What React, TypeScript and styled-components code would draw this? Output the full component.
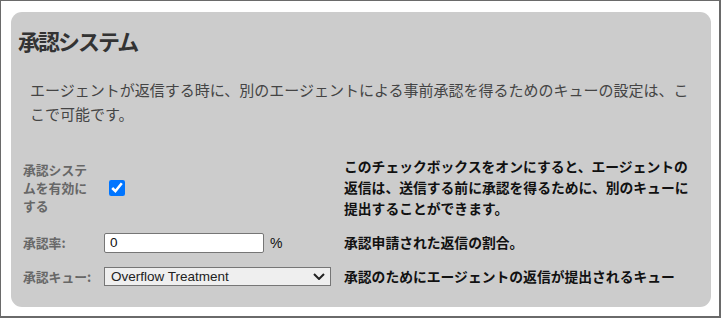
import styled, { createGlobalStyle } from "styled-components";

const Global = createGlobalStyle`
  html, body {
    margin: 0;
    padding: 0;
    background: #fff;
  }
  body {
    font-family: "Noto Sans CJK JP", "Noto Sans", sans-serif;
  }
`;

// outer window frame
const Frame = styled.div`
  box-sizing: border-box;
  width: 721px;
  height: 318px;
  border-style: solid;
  border-color: #6a6a6a;
  border-width: 1px 2px 2px 1px;
  padding: 11px 8px 9px 10px;
  background: #fff;
`;

const Panel = styled.div`
  box-sizing: border-box;
  height: 100%;
  background: #cccccc;
  border-radius: 11px;
  padding: 12px 14px 20px 7px;
`;

const Title = styled.h2`
  margin: 0;
  font-size: 22px;
  line-height: 32px;
  font-weight: 700;
  letter-spacing: -2px;
  color: #333;
`;

const Intro = styled.p`
  width: 664px;
  margin: 22px 0 30px 12px;
  font-size: 15px;
  line-height: 24px;
  color: #444;
`;

const Form = styled.div`
  display: grid;
  grid-template-columns: 81px 240px 1fr;
  row-gap: 13px;
  align-items: center;
  margin-left: 5px;
`;

const Label = styled.div`
  font-size: 12.8px;
  line-height: 18px;
  font-weight: 700;
  color: #676767;
  padding-right: 8px;
`;

const Control = styled.div`
  display: flex;
  align-items: center;
  gap: 6px;
`;

const Check = styled.input`
  width: 16px;
  height: 16px;
  margin: 0 0 0 5px;
  accent-color: #0075ff;
`;

const TextInput = styled.input`
  box-sizing: border-box;
  width: 160px;
  height: 20px;
  border: 1px solid #767676;
  border-radius: 2px;
  padding: 0 5px;
  font-family: "Liberation Sans", Arial, sans-serif;
  font-size: 13.5px;
  color: #111;
  background: #fff;
  outline: none;
`;

const Unit = styled.span`
  font-family: "Liberation Sans", Arial, sans-serif;
  font-size: 14px;
  color: #111;
`;

const SelectWrap = styled.div`
  position: relative;
  width: 227px;
  height: 19px;
`;

const Select = styled.select`
  display: block;
  appearance: none;
  box-sizing: border-box;
  width: 100%;
  height: 100%;
  border: 1px solid #767676;
  border-radius: 0;
  padding: 0 0 0 6px;
  background: #efefef;
  font-family: "Liberation Sans", Arial, sans-serif;
  font-size: 13.5px;
  color: #222;
  outline: none;
`;

const Chevron = styled.svg`
  position: absolute;
  right: 6px;
  top: 6px;
  pointer-events: none;
`;

const Help = styled.div`
  font-size: 13.8px;
  line-height: 21px;
  font-weight: 700;
  color: #111;
`;

export default function App() {
  return (
    <>
      <Global />
      <Frame>
        <Panel>
          <Title>承認システム</Title>
          <Intro>
            エージェントが返信する時に、別のエージェントによる事前承認を得るためのキューの設定は、ここで可能です。
          </Intro>
          <Form>
            <Label>承認システムを有効にする</Label>
            <Control>
              <Check type="checkbox" defaultChecked />
            </Control>
            <Help>
              このチェックボックスをオンにすると、エージェントの返信は、送信する前に承認を得るために、別のキューに提出することができます。
            </Help>

            <Label>承認率:</Label>
            <Control>
              <TextInput type="text" defaultValue="0" />
              <Unit>%</Unit>
            </Control>
            <Help>承認申請された返信の割合。</Help>

            <Label>承認キュー:</Label>
            <Control>
              <SelectWrap>
                <Select defaultValue="overflow">
                  <option value="overflow">Overflow Treatment</option>
                </Select>
                <Chevron width="12" height="7" viewBox="0 0 12 7">
                  <path d="M1 1l5 5 5-5" fill="none" stroke="#222" strokeWidth="2" />
                </Chevron>
              </SelectWrap>
            </Control>
            <Help>承認のためにエージェントの返信が提出されるキュー</Help>
          </Form>
        </Panel>
      </Frame>
    </>
  );
}
